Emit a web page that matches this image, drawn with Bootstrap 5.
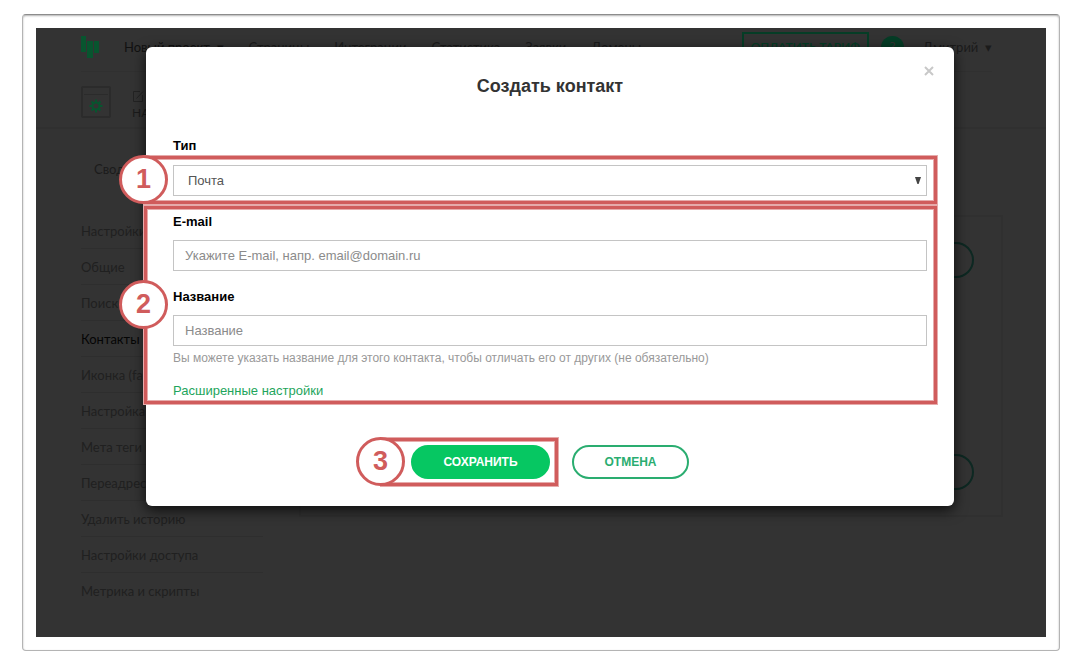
<!DOCTYPE html>
<html lang="ru">
<head>
<meta charset="utf-8">
<meta name="viewport" content="width=device-width, initial-scale=1">
<title>Создать контакт</title>
<link href="https://cdn.jsdelivr.net/npm/bootstrap@5.3.0/dist/css/bootstrap.min.css" rel="stylesheet">
<style>
  :root { --mark: #d05c5c; --mark-soft: #e6abab; --go: #06c762; --go-line: #2aad70; }
  body { font-family: "Liberation Sans", Arial, sans-serif; font-size: 13px; line-height: 20px; color: #000; background: #fff; }
  .frame { margin: 14px 19px 13px 22px; padding: 13px; min-height: calc(100vh - 27px); border: 1px solid #b4b4b4; border-top-color: #8c8c8c; border-radius: 4px; box-shadow: inset 0 1px 2px rgba(0,0,0,.3); }
  .stage { background: #333; }

  /* dimmed page */
  .page { font-family: Lato, "Open Sans", sans-serif; color: #1b1b1b; padding: 0 54px 0 45px; }
  .page a, .page button { color: inherit; text-decoration: none; white-space: nowrap; }
  .topbar { height: 44px; padding-bottom: 5px; border-bottom: 1px solid #303030; }
  .topbar .links { gap: 25px; }
  .brand { margin-right: 25px; }
  .current { color: #111 !important; }
  .pay { width: 127px; height: 30px; border: 2px solid #053d26; color: #053d26 !important; background: none; font-size: 12px; font-weight: 600; padding: 0; }
  .avatar { width: 23px; height: 23px; background: #053d26; color: #333; margin: 0 19px 0 12px; font-size: 14px; }
  .project { padding: 14px 0 10px; gap: 20px; height: 57px; margin: 0 -54px 0 -45px; padding-left: 45px; border-bottom: 2px solid #303030; font-size: 12px; line-height: 18px; }
  .summary { padding: 30px 0 0 13px; }
  .side { width: 182px; margin-top: 34px; }
  .side a { display: block; height: 36px; line-height: 36px; border-bottom: 1px solid #2e2e2e; color: #202020; }
  .side a:last-child { border: 0; }
  .side a.on { color: #050505; }
  .panel { margin: 36px -11px 0 36px; height: 302px; border: 2px solid #303030; padding: 25px 27px; }
  .pill { width: 120px; height: 36px; border: 2px solid #0d2822; background: none; color: #0d2822 !important; }

  /* dialog */
  .layer { padding: 19px 92px 0 110px; }
  .dialog { background: #fff; border-radius: 6px; box-shadow: 0 4px 14px rgba(0,0,0,.75); padding-bottom: 20px; }
  .dialog h1 { font-size: 18px; line-height: 24px; font-weight: 700; color: #333; padding-top: 27px; margin-bottom: 38px; }
  .shut { top: 14px; right: 16px; width: 18px; height: 20px; }
  .caption { font-weight: 700; display: block; }
  .type-caption { margin-left: 27px; }
  .marked { position: relative; border: 3px solid var(--mark); box-shadow: 0 0 0 1px var(--mark-soft), inset 0 0 0 1px var(--mark-soft); }
  .wide { margin: 0 17px 2px -2px; }
  .type-box { padding: 6px 7px 5px 26px; }
  .data-box { padding: 3px 7px 1px 26px; }
  .data-box .caption { margin-bottom: 8px; }
  .data-box .caption.next { margin-top: 16px; }
  .field { height: 31px; border: 1px solid #c4c4c4; border-radius: 0; font-size: 13px; line-height: 20px; padding: 4px 11px; color: #555; background-color: #fff; }
  .field::placeholder { color: #8b8b8b; }
  select.field { padding-left: 14px; background-image: url("data:image/svg+xml,%3Csvg xmlns='http://www.w3.org/2000/svg' viewBox='0 0 6 7'%3E%3Cpath d='M0 0h6L3.600 7H2.400z' fill='%23444'/%3E%3C/svg%3E"); background-size: 6px 7px; background-position: right 5px center; }
  .hint { font-size: 12px; line-height: 16px; color: #999; margin: 4px 0 16px; }
  .more { display: block; line-height: 18px; color: #1ea55c; text-decoration: none; }
  .step { position: absolute; left: -28px; top: 50%; width: 49px; height: 49px; margin-top: -25px; border: 3px solid var(--mark); border-radius: 50%; background: #fff; color: var(--mark); font-size: 27px; font-weight: 700; line-height: 43px; text-align: center; }
  .actions { margin-top: 34px; gap: 14px; }
  .save-box { margin-left: -30px; padding: 4px 5px 4px 27px; }
  .act { height: 34px; border-radius: 17px; font-size: 12px; font-weight: 700; line-height: 20px; padding: 0; border: 2px solid var(--go-line); color: var(--go-line); width: 117px; }
  .act.save { width: 139px; background: var(--go); border-color: var(--go); color: #fff; }
</style>
</head>
<body>
<div class="frame d-flex">
  <div class="stage position-relative flex-grow-1">
    <div class="page" aria-hidden="true">
      <header class="topbar d-flex align-items-center">
        <svg class="brand flex-shrink-0" width="18" height="22" viewBox="0 0 18 22" fill="#08552f"><path d="M0 0h5v16H0z"/><path d="M6 5h6v17H6z"/><path d="M13 5h5v12h-5z"/></svg>
        <nav class="links d-flex">
          <a class="current" href="#">Новый проект&nbsp; ▾</a>
          <a href="#">Страницы</a>
          <a href="#">Интеграции</a>
          <a href="#">Статистика</a>
          <a href="#">Заявки</a>
          <a href="#">Домены</a>
        </nav>
        <button class="pay ms-auto" type="button">ОПЛАТИТЬ ТАРИФ</button>
        <span class="avatar rounded-circle d-flex align-items-center justify-content-center">?</span>
        <a href="#">Дмитрий&nbsp; ▾</a>
      </header>
      <div class="project d-flex">
        <svg width="31" height="32" viewBox="0 0 31 32" fill="none" stroke="#2b2b2b"><rect x="1" y="1" width="28" height="30" rx="1" stroke-width="2"/><path d="M3 8.500h24"/><circle cx="15" cy="20" r="3.500" stroke="#08552f" stroke-width="2"/><path d="M15 13.500v3M15 23.500v3M8.500 20h3M18.500 20h3M10.500 15.500l2 2M17.500 22.500l2 2M19.500 15.500l-2 2M12.500 22.500l-2 2" stroke="#08552f" stroke-width="2"/></svg>
        <div>
          <svg class="d-block" width="12" height="18" viewBox="0 0 12 18" fill="none" stroke="#232323"><path d="M8 5.500H1.500v10h9V9M4.500 12.500 11 5.500"/></svg>
          <a href="#">НАСТРОЙКИ</a>
        </div>
      </div>
      <div class="summary"><a href="#">Сводка</a></div>
      <div class="d-flex align-items-start">
        <nav class="side flex-shrink-0">
          <a href="#">Настройки</a>
          <a href="#">Общие</a>
          <a href="#">Поиск</a>
          <a class="on" href="#">Контакты</a>
          <a href="#">Иконка (favicon)</a>
          <a href="#">Настройка</a>
          <a href="#">Мета теги и</a>
          <a href="#">Переадресация</a>
          <a href="#">Удалить историю</a>
          <a href="#">Настройки доступа</a>
          <a href="#">Метрика и скрипты</a>
        </nav>
        <div class="panel flex-grow-1 d-flex flex-column align-items-end justify-content-between">
          <button class="pill rounded-pill" type="button">Добавить</button>
          <button class="pill rounded-pill" type="button">Добавить</button>
        </div>
      </div>
    </div>

    <div class="layer position-absolute top-0 start-0 w-100">
      <form class="dialog position-relative" role="dialog" aria-labelledby="title">
        <button class="shut btn p-0 border-0 position-absolute d-flex align-items-center justify-content-center" type="button" aria-label="Закрыть"><svg width="10" height="10" viewBox="0 0 10 10" stroke="#c8c8c8" stroke-width="2"><path d="M1 1l8 8M9 1l-8 8"/></svg></button>
        <h1 id="title" class="text-center">Создать контакт</h1>
        <label class="caption type-caption" for="type">Тип</label>
        <div class="marked wide type-box">
          <select id="type" class="form-select field"><option>Почта</option></select>
          <span class="step">1</span>
        </div>
        <div class="marked wide data-box">
          <label class="caption" for="mail">E-mail</label>
          <input id="mail" class="form-control field" type="email" placeholder="Укажите E-mail, напр. email@domain.ru">
          <label class="caption next" for="name">Название</label>
          <input id="name" class="form-control field" type="text" placeholder="Название">
          <p class="hint">Вы можете указать название для этого контакта, чтобы отличать его от других (не обязательно)</p>
          <a class="more" href="#">Расширенные настройки</a>
          <span class="step">2</span>
        </div>
        <div class="actions d-flex justify-content-center align-items-center">
          <div class="marked save-box">
            <button class="btn act save" type="submit">СОХРАНИТЬ</button>
            <span class="step">3</span>
          </div>
          <button class="btn act" type="button">ОТМЕНА</button>
        </div>
      </form>
    </div>
  </div>
</div>
<script src="https://cdn.jsdelivr.net/npm/bootstrap@5.3.0/dist/js/bootstrap.bundle.min.js"></script>
</body>
</html>
